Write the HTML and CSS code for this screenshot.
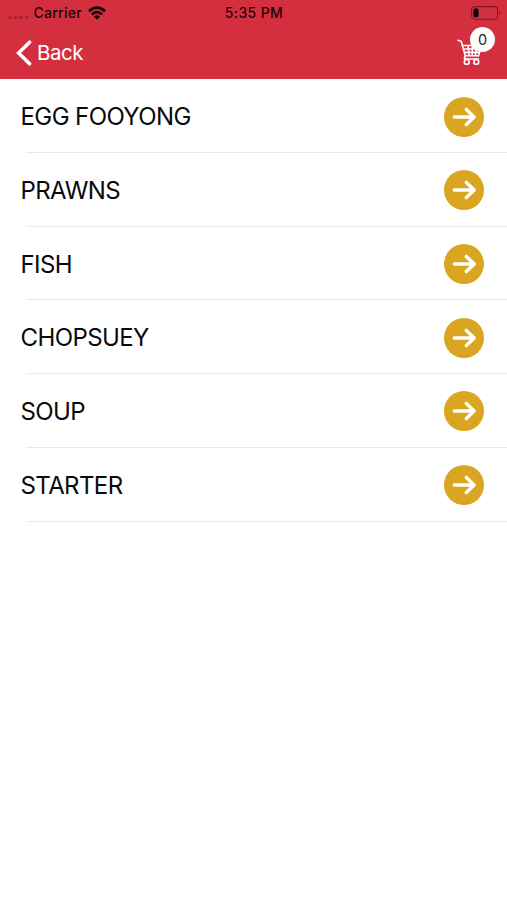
FILE: index.html
```
<!DOCTYPE html>
<html lang="en">
<head>
<meta charset="utf-8">
<title>Menu</title>
<link rel="stylesheet" href="styles.css">
</head>
<body>
<svg class="symbols" aria-hidden="true">
  <symbol id="go" viewBox="0 0 40 40">
    <circle cx="20" cy="20" r="20" fill="#daa520"/>
    <path d="M10.3 20H30M22.3 12.4L30.2 20L22.3 27.6" fill="none" stroke="#fff" stroke-width="3.4" stroke-linecap="round" stroke-linejoin="round"/>
  </symbol>
</svg>
<header class="header">
  <div class="status">
    <div class="carrier">
      <span class="dots"><i></i><i></i><i></i><i></i></span>
      <span class="carrier-name">Carrier</span>
      <svg class="wifi" viewBox="0 0 18 14">
        <g fill="none" stroke="#130406" stroke-width="2.6">
          <path d="M.9 5.3Q9-2.2 17.1 5.3"/>
          <path d="M3.8 8.5Q9 3.7 14.2 8.5"/>
        </g>
        <path d="M5.9 10.6Q9 8 12.1 10.6L9 13.8Z" fill="#130406"/>
      </svg>
    </div>
    <div class="time">5:35 PM</div>
    <svg class="battery" viewBox="0 0 30 14">
      <rect x=".6" y=".6" width="26" height="12.6" rx="3.4" fill="none" stroke="#7d1822" stroke-width="1.1"/>
      <rect x="2.5" y="2.5" width="5" height="8.8" rx="1.5" fill="#080203"/>
      <path d="M28.2 4.8Q30.6 6.9 28.2 9Z" fill="#7d1822"/>
    </svg>
  </div>
  <nav class="nav">
    <a class="back">
      <svg class="chevron" viewBox="0 0 16 26"><path d="M13.6 2.2L2.6 13L13.6 23.8" fill="none" stroke="#fff" stroke-width="3.5" stroke-linecap="round" stroke-linejoin="miter"/></svg>
      <span>Back</span>
    </a>
    <div class="cart">
      <svg class="cart-icon" viewBox="0 0 26 27">
        <g fill="none" stroke="#fff" stroke-width="1.6" stroke-linecap="round" stroke-linejoin="round">
          <path d="M1 1.2L4.2 2.2L8.3 16.7H21.4"/>
          <path d="M5.5 6.5H24.5L21.5 16.7M6.6 10H23M7.6 13.4H22M11 6.5L12.2 16.5M15.3 6.5V16.5M19.7 6.5L18.4 16.5"/>
          <path d="M8.5 16.7Q6.3 20 8.5 20H21.5"/>
          <circle cx="9.7" cy="22.9" r="2.4"/>
          <circle cx="19.3" cy="22.9" r="2.4"/>
        </g>
      </svg>
      <span class="badge">0</span>
    </div>
  </nav>
</header>
<main class="list">
  <div class="row"><span>EGG FOOYONG</span><svg class="go"><use href="#go"/></svg></div>
  <div class="row"><span>PRAWNS</span><svg class="go"><use href="#go"/></svg></div>
  <div class="row"><span>FISH</span><svg class="go"><use href="#go"/></svg></div>
  <div class="row"><span>CHOPSUEY</span><svg class="go"><use href="#go"/></svg></div>
  <div class="row"><span>SOUP</span><svg class="go"><use href="#go"/></svg></div>
  <div class="row"><span>STARTER</span><svg class="go"><use href="#go"/></svg></div>
</main>
</body>
</html>
```
FILE: styles.css
```
* { box-sizing: border-box; }
body {
  margin: 0;
  background: #fff;
  color: #0a0a0a;
  font-family: Inter, "Liberation Sans", sans-serif;
}
.symbols { display: block; width: 0; height: 0; }
.header { height: 79.4px; background: #d32f3f; }
.status {
  display: grid;
  grid-template-columns: 1fr auto 1fr;
  align-items: center;
  height: 26px;
  padding: 0 6px 0 8px;
  color: #1c0508;
  font-size: 14px;
  font-weight: 500;
  line-height: 26px;
}
.carrier { display: flex; align-items: center; }
.dots { display: flex; gap: 2px; margin: 8px 5px 0 0; }
.dots i { width: 3.6px; height: 3px; border-radius: 50%; background: #a3202e; }
.carrier-name { letter-spacing: .3px; }
.time { letter-spacing: .35px; margin-left: -1px; }
.wifi { width: 18px; height: 14px; margin-left: 6px; }
.battery { width: 30px; height: 14px; justify-self: end; }
.nav {
  display: flex;
  justify-content: space-between;
  height: 53px;
  padding: 0 24px 0 16px;
}
.back { display: flex; align-items: center; gap: 5px; height: 53px; color: #fff; font-size: 20.5px; letter-spacing: -.5px; }
.chevron { width: 16px; height: 26px; }
.cart { position: relative; width: 26px; height: 27px; margin-top: 13px; }
.cart-icon { display: block; width: 26px; height: 27px; }
.badge {
  position: absolute;
  left: 13px;
  top: -12px;
  width: 25px;
  height: 25px;
  border-radius: 50%;
  background: #fff;
  color: #222;
  font-size: 14.5px;
  line-height: 25px;
  text-align: center;
}
.row {
  display: flex;
  align-items: center;
  justify-content: space-between;
  height: 73.7px;
  padding: 1px 23px 0 20.5px;
  background: linear-gradient(#e9e9e9, #e9e9e9) 26px 100% / 100% 1px no-repeat;
  font-size: 24px;
  letter-spacing: -.6px;
}
.go { width: 40px; height: 40px; }
```
